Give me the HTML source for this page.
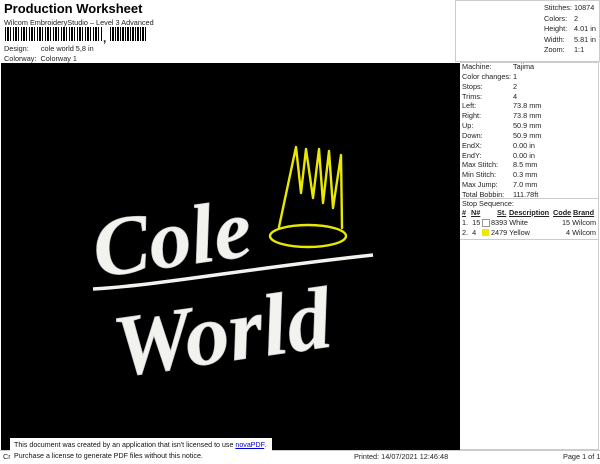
<!DOCTYPE html>
<html><head><meta charset="utf-8"><style>
body{margin:0;width:600px;height:464px;background:#fff;font-family:"Liberation Sans",sans-serif;color:#222;position:relative;overflow:hidden;font-size:7.3px}
.a{position:absolute;white-space:nowrap}
.blk{position:absolute;left:1px;top:63px;width:459px;height:387px;background:#000}
.rp{position:absolute;left:460px;top:62px;width:139px;height:388px;border:1px solid #ccc;border-left:none;box-sizing:border-box}
.tb{position:absolute;left:455px;top:0;width:145px;height:62px;border:1px solid #ccc;box-sizing:border-box}
</style></head><body>
<div class="a" style="left:4px;top:1px;font-size:13px;font-weight:bold;color:#000">Production Worksheet</div>
<div class="a" style="left:4px;top:18px">Wilcom EmbroideryStudio – Level 3 Advanced</div>
<div class="a" style="left:5px;top:27px;width:97px;height:14px;background:repeating-linear-gradient(90deg,#000 0 1px,#fff 1px 2px,#000 2px 4px,#fff 4px 5px,#000 5px 6px,#fff 6px 8px)"></div>
<div class="a" style="left:103px;top:31px;font-size:12px;font-weight:bold">,</div>
<div class="a" style="left:110px;top:27px;width:36px;height:14px;background:repeating-linear-gradient(90deg,#000 0 1px,#fff 1px 2px,#000 2px 4px,#fff 4px 5px)"></div>
<div class="a" style="left:4px;top:44px">Design:&nbsp;&nbsp;&nbsp;&nbsp;&nbsp;&nbsp;cole world 5,8 in</div>
<div class="a" style="left:4px;top:54px">Colorway:&nbsp;&nbsp;Colorway 1</div>
<div class="tb"></div>
<div class="a" style="left:544px;top:3px;line-height:10.5px">Stitches:<br>Colors:<br>Height:<br>Width:<br>Zoom:</div>
<div class="a" style="left:574px;top:3px;line-height:10.5px">10874<br>2<br>4.01 in<br>5.81 in<br>1:1</div>
<div class="blk"></div>
<div class="rp"></div>
<div class="a" style="left:462px;top:62px;line-height:9.85px">Machine:<br>Color changes:<br>Stops:<br>Trims:<br>Left:<br>Right:<br>Up:<br>Down:<br>EndX:<br>EndY:<br>Max Stitch:<br>Min Stitch:<br>Max Jump:<br>Total Bobbin:</div>
<div class="a" style="left:513px;top:62px;line-height:9.85px">Tajima<br>1<br>2<br>4<br>73.8 mm<br>73.8 mm<br>50.9 mm<br>50.9 mm<br>0.00 in<br>0.00 in<br>8.5 mm<br>0.3 mm<br>7.0 mm<br>111.78ft</div>
<div class="a" style="left:460px;top:198px;width:139px;border-top:1px solid #ccc"></div>
<div class="a" style="left:462px;top:199px">Stop Sequence:</div>
<div class="a" style="left:462px;top:208px;font-weight:bold;text-decoration:underline">#</div>
<div class="a" style="left:471px;top:208px;font-weight:bold;text-decoration:underline">N#</div>
<div class="a" style="left:497px;top:208px;font-weight:bold;text-decoration:underline">St.</div>
<div class="a" style="left:509px;top:208px;font-weight:bold;text-decoration:underline">Description</div>
<div class="a" style="left:553px;top:208px;font-weight:bold;text-decoration:underline">Code</div>
<div class="a" style="left:573px;top:208px;font-weight:bold;text-decoration:underline">Brand</div>
<div class="a" style="left:462px;top:218px">1.&nbsp; 15</div>
<div class="a" style="left:482px;top:219px;width:6px;height:6px;border:1px solid #999;background:#fff"></div>
<div class="a" style="left:491px;top:218px">8393 White</div>
<div class="a" style="left:562px;top:218px">15 Wilcom</div>
<div class="a" style="left:462px;top:228px">2.&nbsp; 4</div>
<div class="a" style="left:482px;top:229px;width:7px;height:7px;background:#f0e800"></div>
<div class="a" style="left:491px;top:228px">2479 Yellow</div>
<div class="a" style="left:566px;top:228px">4 Wilcom</div>
<div class="a" style="left:460px;top:239px;width:139px;border-top:1px solid #ccc"></div>
<svg class="a" style="left:1px;top:63px" width="459" height="387">
<g fill="none" stroke="#e8e800" stroke-width="2.4" stroke-linejoin="round" stroke-linecap="round">
<ellipse cx="307" cy="173" rx="38" ry="11"/>
<path d="M278 164 L295 84 L300 130 L305 86 L312 135 L318 86 L322 140 L328 88 L332 145 L340 92 L341 165"/>
</g>
<g fill="#f2f2ee" stroke="#bbb" stroke-width="0.6" font-family="'Liberation Serif',serif" font-style="italic" font-weight="bold">
<text x="92" y="205" font-size="84" transform="rotate(-8 160 180)">Cole</text>
<text x="112" y="296" font-size="88" transform="rotate(-8 240 270)">World</text>
</g>
<path d="M92 226 C160 222 250 205 372 192" stroke="#f2f2ee" stroke-width="3.5" fill="none"/>
</svg>
<div class="a" style="left:0;top:450px;width:600px;border-top:1px solid #ccc"></div>
<div class="a" style="left:3px;top:452px">Cr</div>
<div class="a" style="left:354px;top:452px">Printed: 14/07/2021 12:46:48</div>
<div class="a" style="left:563px;top:452px">Page 1 of 1</div>
<div class="a" style="left:10px;top:438px;width:262px;height:26px;background:#fff"></div>
<div class="a" style="left:14px;top:440px;font-size:7.1px;line-height:11px;color:#111">This document was created by an application that isn't licensed to use <span style="color:#00c;text-decoration:underline">novaPDF</span>.<br>Purchase a license to generate PDF files without this notice.</div>
</body></html>
